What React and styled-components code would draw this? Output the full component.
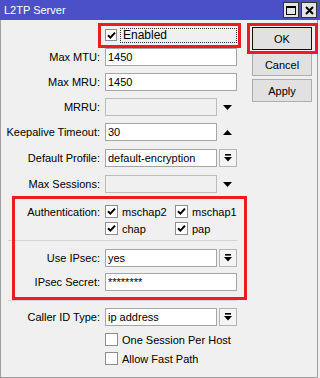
import React from 'react';
import styled, { createGlobalStyle } from 'styled-components';

const Global = createGlobalStyle`
  html, body { margin: 0; padding: 0; background: #f0f0f0; }
  body {
    font-family: "Liberation Sans", Arial, sans-serif;
    font-size: 11px;
    color: #000;
  }
`;

const Window = styled.div`
  position: relative;
  width: 320px;
  height: 378px;
  box-sizing: border-box;
  background: #f0f0f0;
  display: flex;
  flex-direction: column;
`;

const TitleBar = styled.div`
  height: 20px;
  flex: none;
  background: #4b50c8;
  display: flex;
  align-items: center;
  padding: 0 3px 0 4px;
  color: #fff;
  font-size: 11px;
`;

const Title = styled.span`
  flex: 1;
`;

const TitleButtons = styled.div`
  display: flex;
  gap: 2px;
`;

const TitleButton = styled.div`
  width: 16px;
  height: 16px;
  box-sizing: border-box;
  border: 1px solid #333;
  background: #e4e4e4;
  display: flex;
  align-items: center;
  justify-content: center;
`;

const Body = styled.div`
  flex: 1;
  display: flex;
  border: 1px solid #a0a0a0;
  border-top: none;
  margin-right: 2px;
`;

const Form = styled.div`
  width: 246px;
  display: flex;
  flex-direction: column;
`;

const Row = styled.div`
  display: flex;
  align-items: center;
  height: ${p => p.$h || 18}px;
  margin-top: ${p => p.$mt || 0}px;
`;

const Label = styled.div`
  width: 104px;
  box-sizing: border-box;
  padding-right: 5px;
  text-align: right;
  white-space: nowrap;
`;

const Field = styled.div`
  width: ${p => p.$w}px;
  height: 18px;
  box-sizing: border-box;
  border: 1px solid ${p => (p.$disabled ? '#bcbcbc' : '#a6a6a6')};
  background: ${p => (p.$disabled ? '#f0f0f0' : '#fff')};
  padding-left: 2px;
  line-height: 16px;
  white-space: nowrap;
  overflow: hidden;
`;

const DropButton = styled.div`
  width: 18px;
  height: 18px;
  margin-left: 2px;
  box-sizing: border-box;
  border: 1px solid #b4b4b4;
  background: #f4f4f4;
  display: flex;
  align-items: center;
  justify-content: center;
`;

const Arrow = styled.div`
  margin-left: 6px;
  display: flex;
  align-items: center;
`;

const Separator = styled.div`
  height: 1px;
  width: 229px;
  margin: ${p => p.$mt}px 0 0 7px;
  background: #d4d4d4;
`;

const CheckGroup = styled.div`
  display: flex;
`;

const CheckItem = styled.div`
  display: flex;
  align-items: center;
  gap: 4px;
  width: ${p => (p.$w ? `${p.$w}px` : 'auto')};
  white-space: nowrap;
`;

const Box = styled.div`
  width: ${p => p.$s || 13}px;
  height: ${p => p.$s || 13}px;
  box-sizing: border-box;
  border: 1px solid #8d8d8d;
  background: #fff;
  display: flex;
  align-items: center;
  justify-content: center;
  flex: none;
`;

const FocusText = styled.div`
  margin-left: 3px;
  width: 117px;
  height: 15px;
  box-sizing: border-box;
  border: 1px dotted #333;
  padding-left: 2px;
  line-height: 13px;
  font-size: 12px;
`;

const ButtonCol = styled.div`
  display: flex;
  flex-direction: column;
  gap: 3px;
  padding: 7px 0 0 5px;
`;

const Button = styled.div`
  width: 60px;
  height: 23px;
  box-sizing: border-box;
  border: 1px solid ${p => (p.$default ? '#111' : '#adadad')};
  background: #e1e1e1;
  display: flex;
  align-items: center;
  justify-content: center;
  font-size: 11px;
`;

const Highlight = styled.div`
  position: absolute;
  left: ${p => p.$x}px;
  top: ${p => p.$y}px;
  width: ${p => p.$w}px;
  height: ${p => p.$h}px;
  box-sizing: border-box;
  border: 3px solid #ed1c24;
  pointer-events: none;
`;

const Check = () => (
  <svg width="9" height="9" viewBox="0 0 9 9">
    <path d="M1 4.2 L3.4 6.6 L8 1.6" fill="none" stroke="#000" strokeWidth="2" />
  </svg>
);

const CheckBox = ({ checked, size }) => <Box $s={size}>{checked && <Check />}</Box>;

const DropIcon = () => (
  <svg width="8" height="8" viewBox="0 0 8 8">
    <rect x="1" y="0" width="6" height="1.6" fill="#000" />
    <polygon points="0,3 8,3 4,7.5" fill="#000" />
  </svg>
);

const Tri = ({ up }) => (
  <svg width="9" height="5" viewBox="0 0 9 5">
    <polygon points={up ? '0,5 9,5 4.5,0' : '0,0 9,0 4.5,5'} fill="#000" />
  </svg>
);

export default function App() {
  return (
    <>
      <Global />
      <Window>
        <TitleBar>
          <Title>L2TP Server</Title>
          <TitleButtons>
            <TitleButton>
              <svg width="10" height="9" viewBox="0 0 10 9">
                <rect x="0.5" y="0.5" width="9" height="8" fill="none" stroke="#000" />
                <rect x="0" y="0" width="10" height="2" fill="#000" />
              </svg>
            </TitleButton>
            <TitleButton>
              <svg width="9" height="9" viewBox="0 0 9 9">
                <path d="M1 1 L8 8 M8 1 L1 8" stroke="#000" strokeWidth="2" />
              </svg>
            </TitleButton>
          </TitleButtons>
        </TitleBar>
        <Body>
          <Form>
            <Row $mt={6}>
              <Label />
              <CheckBox checked size={12} />
              <FocusText>Enabled</FocusText>
            </Row>
            <Row $mt={4}>
              <Label>Max MTU:</Label>
              <Field $w={132}>1450</Field>
            </Row>
            <Row $mt={7}>
              <Label>Max MRU:</Label>
              <Field $w={132}>1450</Field>
            </Row>
            <Row $mt={7}>
              <Label>MRRU:</Label>
              <Field $w={112} $disabled />
              <Arrow><Tri /></Arrow>
            </Row>
            <Row $mt={7}>
              <Label>Keepalive Timeout:</Label>
              <Field $w={112}>30</Field>
              <Arrow><Tri up /></Arrow>
            </Row>
            <Row $mt={8}>
              <Label>Default Profile:</Label>
              <Field $w={112}>default-encryption</Field>
              <DropButton><DropIcon /></DropButton>
            </Row>
            <Row $mt={8}>
              <Label>Max Sessions:</Label>
              <Field $w={112} $disabled />
              <Arrow><Tri /></Arrow>
            </Row>
            <Row $mt={10} $h={17}>
              <Label>Authentication:</Label>
              <CheckGroup>
                <CheckItem $w={70}><CheckBox checked />mschap2</CheckItem>
                <CheckItem><CheckBox checked />mschap1</CheckItem>
              </CheckGroup>
            </Row>
            <Row $h={17}>
              <Label />
              <CheckGroup>
                <CheckItem $w={70}><CheckBox checked />chap</CheckItem>
                <CheckItem><CheckBox checked />pap</CheckItem>
              </CheckGroup>
            </Row>
            <Separator $mt={3} />
            <Row $mt={8}>
              <Label>Use IPsec:</Label>
              <Field $w={112}>yes</Field>
              <DropButton><DropIcon /></DropButton>
            </Row>
            <Row $mt={6}>
              <Label>IPsec Secret:</Label>
              <Field $w={132}>********</Field>
            </Row>
            <Separator $mt={9} />
            <Row $mt={7}>
              <Label>Caller ID Type:</Label>
              <Field $w={112}>ip address</Field>
              <DropButton><DropIcon /></DropButton>
            </Row>
            <Row $mt={5} $h={17}>
              <Label />
              <CheckItem><CheckBox />One Session Per Host</CheckItem>
            </Row>
            <Row $mt={2} $h={17}>
              <Label />
              <CheckItem><CheckBox />Allow Fast Path</CheckItem>
            </Row>
          </Form>
          <ButtonCol>
            <Button $default>OK</Button>
            <Button>Cancel</Button>
            <Button>Apply</Button>
          </ButtonCol>
        </Body>
        <Highlight $x={98} $y={23} $w={143} $h={25} />
        <Highlight $x={247} $y={23} $w={71} $h={31} />
        <Highlight $x={12} $y={196} $w={235} $h={104} />
      </Window>
    </>
  );
}
